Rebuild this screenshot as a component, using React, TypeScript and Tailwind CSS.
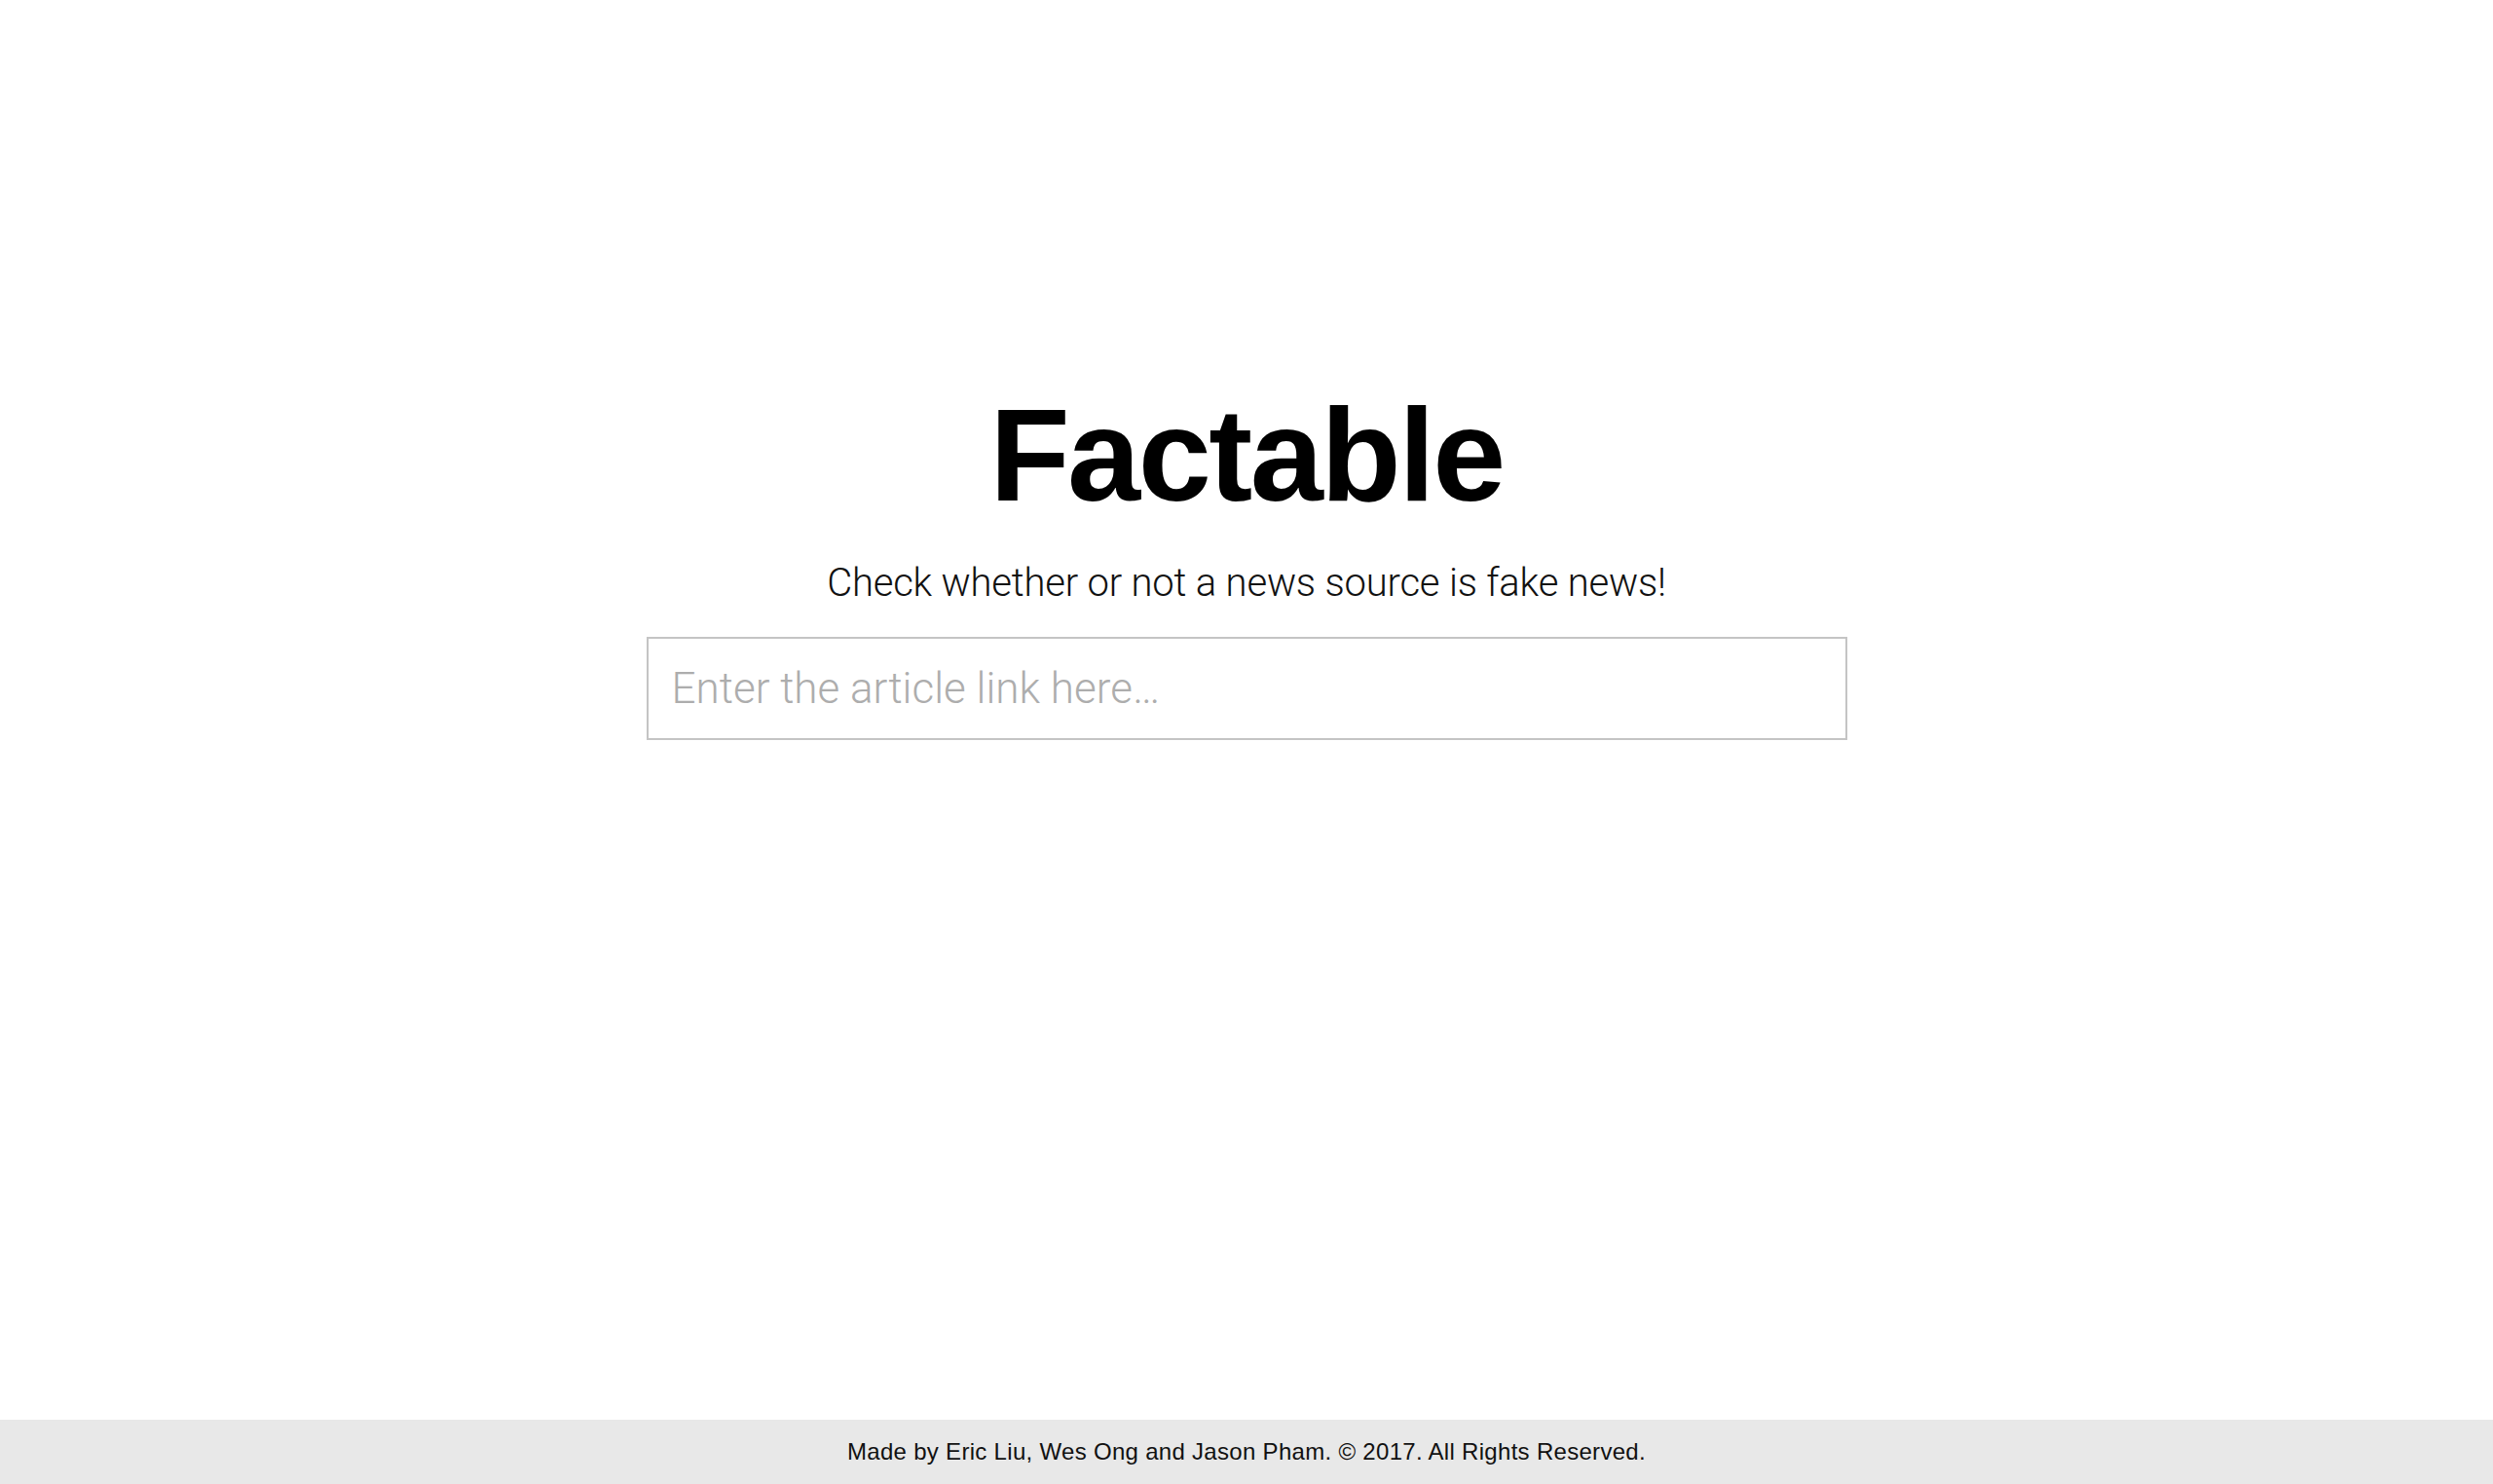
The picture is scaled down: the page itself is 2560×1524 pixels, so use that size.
import React from 'react';

const App: React.FC = () => {
  return (
    <div className="min-h-screen flex flex-col bg-white text-black">
      {/* Hero */}
      <main className="flex-1 flex flex-col items-center pt-[400px]">
        <h1 className="font-['Liberation_Sans',Arial,sans-serif] font-bold text-[135px] leading-none tracking-[-2.5px]">
          Factable
        </h1>
        <p className="mt-[44px] font-['Roboto','Liberation_Sans',sans-serif] font-light text-[40px] leading-none tracking-[-0.2px] text-[#111]">
          Check whether or not a news source is fake news!
        </p>
        <input
          type="text"
          placeholder="Enter the article link here…"
          className="mt-[35px] w-[1233px] h-[106px] border-2 border-[#c4c4c4] px-6 outline-none font-['Roboto','Liberation_Sans',sans-serif] font-light text-[44px] tracking-[0px] text-[#333] placeholder:text-[#adadad]"
        />
      </main>

      {/* Footer */}
      <footer className="h-[66px] bg-[#e8e8e8] flex items-center justify-center">
        <span className="font-['Liberation_Sans',Arial,sans-serif] text-[24px] tracking-[0.3px] text-[#111]">
          Made by Eric Liu, Wes Ong and Jason Pham. © 2017. All Rights Reserved.
        </span>
      </footer>
    </div>
  );
};

export default App;
